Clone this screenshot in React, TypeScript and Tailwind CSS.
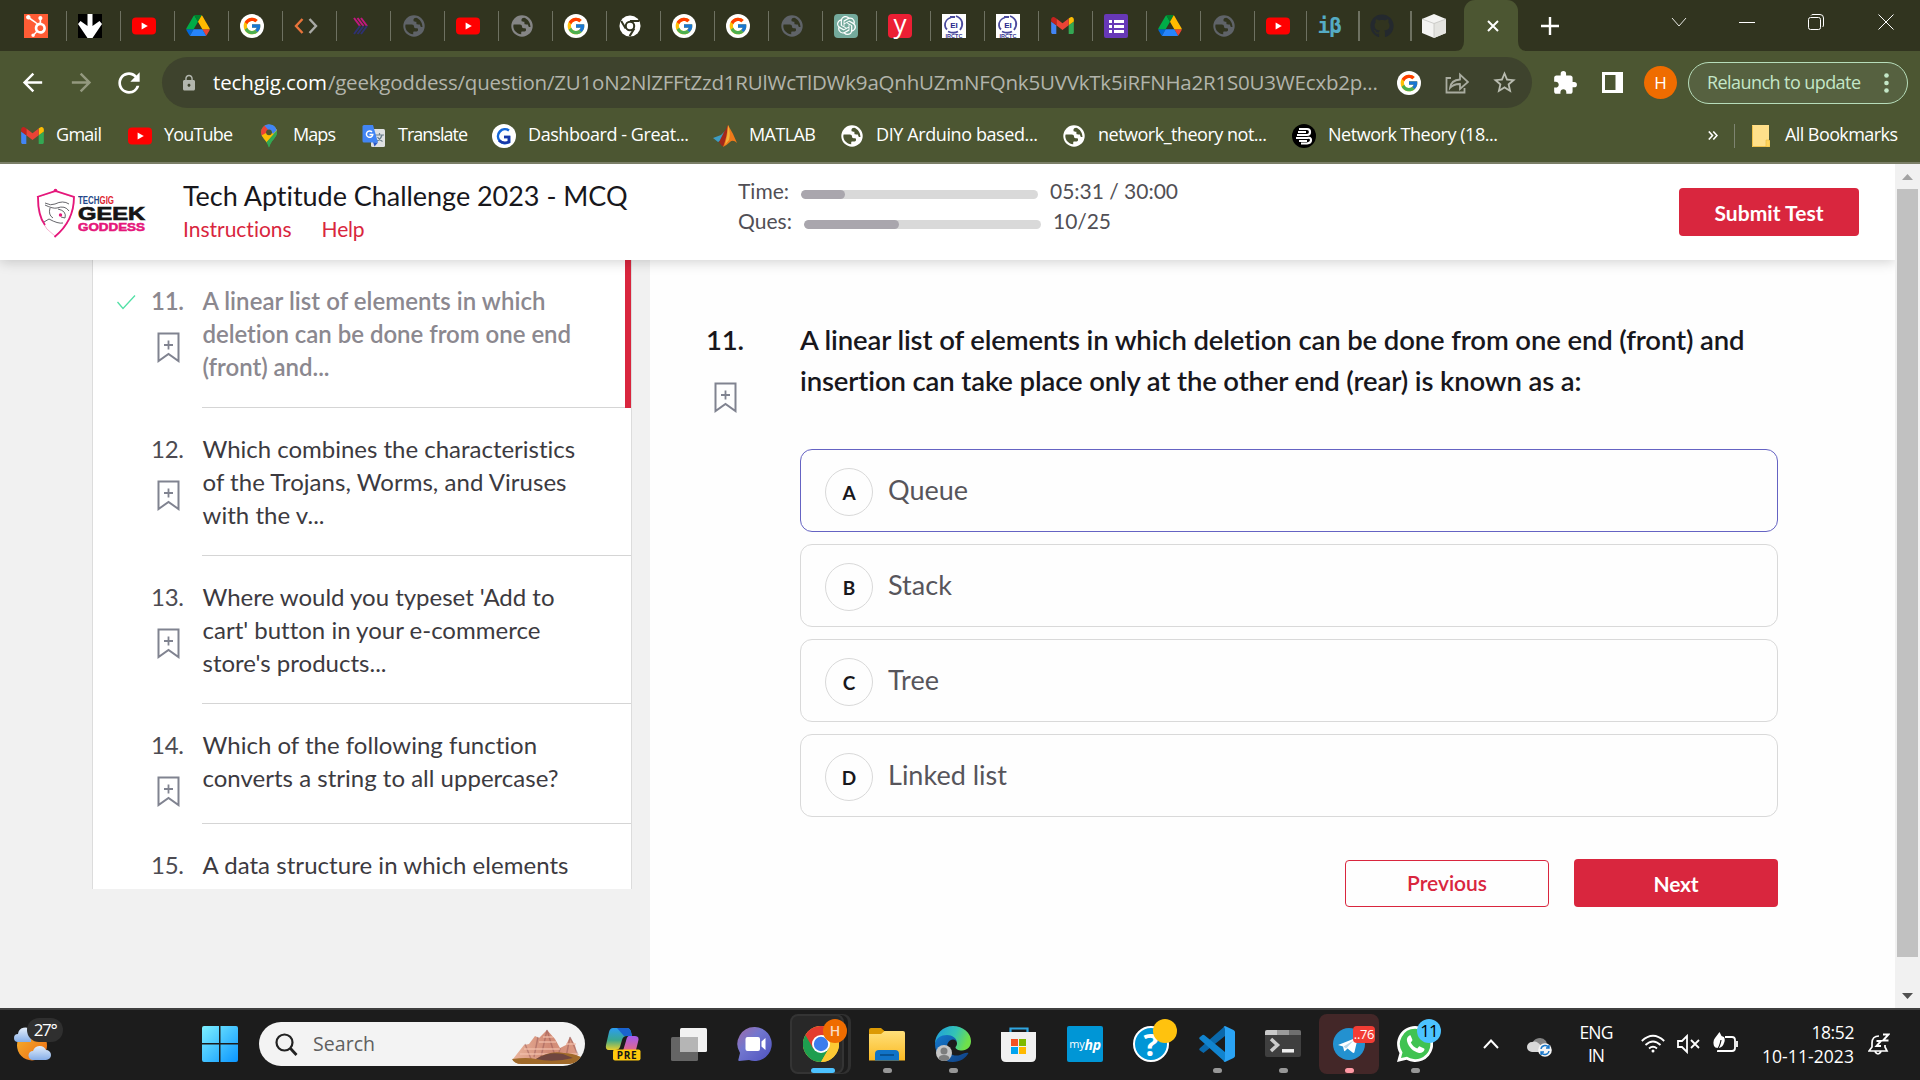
import { useLayoutEffect, useRef, useState, type ReactNode } from "react";
import { FcGoogle } from "react-icons/fc";
import { FaHubspot, FaGithub } from "react-icons/fa";
import { MdArrowBack, MdArrowForward, MdRefresh, MdLock, MdStarBorder, MdExtension } from "react-icons/md";
import { SiOpenai } from "react-icons/si";

/* Text whose tracking is adjusted so that the line fills the given width. */
function Fit({ w, className = "", children }: { w: number; className?: string; children: ReactNode }) {
  const ref = useRef<HTMLSpanElement>(null);
  const [spacing, setSpacing] = useState(0);
  useLayoutEffect(() => {
    const el = ref.current;
    if (!el) return;
    el.style.letterSpacing = "0px";
    const n = (el.textContent || "").length;
    const s = (w - el.getBoundingClientRect().width) / Math.max(1, n - 1);
    el.style.letterSpacing = `${s}px`;
    setSpacing(s);
  }, [w]);
  return (
    <span ref={ref} className={`inline-block whitespace-nowrap ${className}`} style={{ letterSpacing: `${spacing}px` }}>
      {children}
    </span>
  );
}

/* ---------- favicons ---------- */

const YouTube = () => (
  <svg className="h-6 w-6" viewBox="0 0 24 24">
    <rect x="0" y="3.5" width="24" height="17" rx="4" fill="#f00" />
    <path d="M9.6 8.4v7.2l6.2-3.6z" fill="#fff" />
  </svg>
);

const Drive = () => (
  <svg className="h-[21px] w-6" viewBox="0 0 87.3 78">
    <path fill="#0066da" d="m6.6 66.85 3.85 6.65c.8 1.4 1.95 2.5 3.3 3.3l13.75-23.8h-27.5c0 1.55.4 3.1 1.2 4.5z" />
    <path fill="#00ac47" d="m43.65 25-13.75-23.8c-1.35.8-2.5 1.9-3.3 3.3l-25.4 44a9.06 9.06 0 0 0 -1.2 4.5h27.5z" />
    <path fill="#ea4335" d="m73.55 76.8c1.35-.8 2.5-1.9 3.3-3.3l1.6-2.75 7.65-13.25c.8-1.4 1.2-2.95 1.2-4.5h-27.502l5.852 11.5z" />
    <path fill="#00832d" d="m43.65 25 13.75-23.8c-1.35-.8-2.9-1.2-4.5-1.2h-18.5c-1.6 0-3.15.45-4.5 1.2z" />
    <path fill="#2684fc" d="m59.8 53h-32.3l-13.75 23.8c1.35.8 2.9 1.2 4.5 1.2h50.8c1.6 0 3.15-.45 4.5-1.2z" />
    <path fill="#ffba00" d="m73.4 26.5-12.7-22c-.8-1.4-1.95-2.5-3.3-3.3l-13.75 23.8 16.15 28h27.45c0-1.55-.4-3.1-1.2-4.5z" />
  </svg>
);

const Gmail = () => (
  <svg className="h-[17px] w-[23px]" viewBox="52 42 88 66">
    <path fill="#4285f4" d="M58 108h14V74L52 59v43c0 3.32 2.69 6 6 6" />
    <path fill="#34a853" d="M120 108h14c3.32 0 6-2.69 6-6V59l-20 15" />
    <path fill="#fbbc04" d="M120 48v26l20-15v-8c0-7.42-8.47-11.65-14.4-7.2" />
    <path fill="#ea4335" d="M72 74V48l24 18 24-18v26L96 92" />
    <path fill="#c5221f" d="M52 51v8l20 15V48l-5.6-4.2c-5.94-4.45-14.4-.22-14.4 7.2" />
  </svg>
);

const Google = () => (
  <span className="flex h-6 w-6 items-center justify-center rounded-full bg-white">
    <FcGoogle className="h-5 w-5" />
  </span>
);

const Globe = ({ fill = "#5f6368", hole = "#31341f" }: { fill?: string; hole?: string }) => (
  <svg className="h-6 w-6" viewBox="0 0 24 24">
    <circle cx="12" cy="12" r="10.7" fill={fill} />
    <path
      d="M3.6 10.5h6.2c1.4 0 2.2.9 2.2 2s.6 1.700 1.700 1.700h1.200c.9 0 1.100.6 1.100 1.300v.6c0 .9-.5 1.300-1.400 1.300h-2.400c-.6 0-1 .5-1 1.100v1.700c-4.500-.5-7.900-4-7.900-8.300z"
      fill={hole}
    />
    <path d="M14.200 3.700c-1.600 0-2.700.8-2.700 2v.8c0 .8.700 1.200 1.500 1.200h1.400v1.500c0 .8.600 1.200 1.500 1.200h1.300c.8 0 1 .5 1 1.100 0 .9.600 1.500 1.500 1.500h.8c-.2-4.600-2.500-7.900-6.300-9.300z" fill={hole} />
  </svg>
);

const Code = () => (
  <svg className="h-6 w-6" viewBox="0 0 24 24" fill="none" strokeWidth="2.4">
    <path d="M8.500 5 2 12l6.500 7" stroke="#e8743b" />
    <path d="M15.500 5 22 12l-6.500 7" stroke="#a9aaa6" />
  </svg>
);

const Stripes = () => (
  <svg className="h-6 w-6" viewBox="0 0 24 24" fill="none" strokeWidth="2">
    <path d="M6 4l6 8M9.500 4l6 8M13 4l6 8" stroke="#c2187e" />
    <path d="M12 12l-6 8M15.500 12l-6 8M19 12l-6 8" stroke="#2d3170" />
  </svg>
);

const DownArrow = () => (
  <svg className="h-6 w-6" viewBox="0 0 24 24">
    <path d="M0 0h24v24H0z" fill="#000" />
    <path d="M9.500 0h5v12l7-5 2.500 3L14.500 24h-5L0 10l2.500-3 7 5z" fill="#fff" />
  </svg>
);

const ChromeMono = () => (
  <svg className="h-[22px] w-[22px]" viewBox="0 0 24 24">
    <circle cx="12" cy="12" r="11.500" fill="#fff" />
    <circle cx="12" cy="12" r="4.600" fill="none" stroke="#31341f" strokeWidth="2.200" />
    <path d="M12 6.500h10M7.300 14.800 2.400 6.500M16.800 14.700 11.500 23" stroke="#31341f" strokeWidth="2.200" fill="none" />
  </svg>
);

const Institute = () => (
  <svg className="h-6 w-6" viewBox="0 0 24 24">
    <path d="M0 0h24v24H0z" fill="#fff" />
    <path d="M9 3.500a8 8 0 0 0-6 8q0 2 2 4M14 2q5 2 6 6t-2 8M6 17.500q6 2.500 10 0" fill="none" stroke="#4a4a9e" strokeWidth="1.800" />
    <path d="M8 2h5v2H8z" fill="#4a4a9e" />
    <text x="12" y="14" fontSize="8" textAnchor="middle" fontWeight="900" fill="#27278c" fontFamily="Liberation Sans">EI</text>
    <text x="12" y="23.500" fontSize="5.500" textAnchor="middle" textLength="17" fontWeight="700" fill="#34348f" fontFamily="Liberation Sans">IRCTC</text>
  </svg>
);

const Forms = () => (
  <svg className="h-6 w-6" viewBox="0 0 24 24">
    <rect width="24" height="24" rx="2" fill="#6738b7" />
    <path d="M5 6h3v3H5zM10 6h10v3H10zM5 11h3v3H5zM10 11h10v3H10zM5 16h3v3H5zM10 16h10v3H10z" fill="#fff" />
  </svg>
);

const Cube = () => (
  <svg className="h-6 w-6" viewBox="0 0 24 24">
    <path d="M12 0l12 5v14l-12 5L0 19V5z" fill="#f4f4f2" />
    <path d="M12 9.500 24 5v14l-12 5z" fill="#e4e4e0" />
    <path d="M0 5l12 4.500L24 5M12 9.500V24" stroke="#c4c4c0" strokeWidth=".8" fill="none" />
  </svg>
);

const tabs: ReactNode[] = [
  <span className="flex h-6 w-6 items-center justify-center bg-[#ff5c35]"><FaHubspot className="h-[22px] w-[22px] text-white" /></span>,
  <DownArrow />, <YouTube />, <Drive />, <Google />, <Code />, <Stripes />, <Globe />, <YouTube />,
  <Globe fill="#858585" />, <Google />, <ChromeMono />, <Google />, <Google />, <Globe />,
  <span className="flex h-6 w-6 items-center justify-center rounded-sm bg-[#74aa9c]"><SiOpenai className="h-[19px] w-[19px] text-white" /></span>,
  <span className="flex h-6 w-6 items-center justify-center rounded-sm bg-[#ec1f34] pb-1.5 font-['Open_Sans',sans-serif] text-[26px] leading-none text-white">y</span>,
  <Institute />, <Institute />, <Gmail />, <Forms />, <Drive />, <Globe />, <YouTube />,
  <span className="font-['DejaVu_Sans_Mono',monospace] text-[21px] font-bold leading-6 tracking-[-1px] text-[#55acc5]">iβ</span>,
  <FaGithub className="h-6 w-6 text-[#24292e]" />,
  <Cube />,
];

function TabStrip() {
  return (
    <div className="flex h-[51px] bg-[#31341f] pl-[13px]">
      {tabs.map((icon, i) => (
        <div key={i} className={`flex h-[51px] shrink-0 items-center justify-between ${i < 23 ? "w-[54px]" : i === 26 ? "w-[43px]" : "w-[52.250px]"}`}>
          <span className={`flex w-6 justify-center ${i > 23 ? "ml-[10px]" : "ml-[11px]"}`}>{icon}</span>
          {i < 26 && <span className="h-[30px] w-[1.500px] bg-[#6e7161]" />}
        </div>
      ))}
      <div className="flex items-end">
        <svg className="h-[10px] w-[9px]" viewBox="0 0 9 10"><path d="M9 0v10H0q9 0 9-10" fill="#4c5632" /></svg>
        <div className="flex h-[51px] w-[54px] items-center justify-center rounded-t-[11px] bg-[#4c5632]">
          <svg className="mt-px ml-1 h-3 w-3" viewBox="0 0 12 12"><path d="m1 1 10 10M11 1 1 11" stroke="#fff" strokeWidth="2" /></svg>
        </div>
        <svg className="h-[10px] w-[9px]" viewBox="0 0 9 10"><path d="M0 0v10h9q-9 0-9-10" fill="#4c5632" /></svg>
      </div>
      <div className="flex flex-1 items-center text-white">
        <svg className="ml-[14px] h-[18px] w-[18px]" viewBox="0 0 18 18"><path d="M9 0v18M0 9h18" stroke="#fff" strokeWidth="2.400" /></svg>
        <div className="mb-2 ml-auto flex items-center pr-[26px]">
          <svg className="mr-[52px] h-[10px] w-4" viewBox="0 0 16 10"><path d="m1 1 7 8 7-8" stroke="#e8e9e4" fill="none" /></svg>
          <svg className="mr-[53px] h-4 w-4" viewBox="0 0 16 16"><path d="M0 8.500h16" stroke="#fff" /></svg>
          <svg className="mr-[54px] h-4 w-4" viewBox="0 0 16 16"><rect x=".5" y="3.500" width="12" height="12" rx="2" fill="none" stroke="#fff" /><path d="M3 1.500Q3.500.5 5 .5h7q3.500 0 3.500 3.500v7q0 1.500-1 2" fill="none" stroke="#fff" /></svg>
          <svg className="h-4 w-4" viewBox="0 0 16 16"><path d="m.5.5 15 15M15.500.5l-15 15" stroke="#fff" /></svg>
        </div>
      </div>
    </div>
  );
}

function Toolbar() {
  return (
    <div className="flex h-[63px] items-center bg-[#4c5632] text-[#d0d2ca]">
      <div className="flex w-[162px] items-center">
        <MdArrowBack className="ml-[18px] h-[29px] w-[29px] text-white" />
        <MdArrowForward className="ml-[20px] h-[29px] w-[29px] text-[#94997f]" />
        <MdRefresh className="ml-[17px] h-[32px] w-[32px] text-white" />
      </div>
      <div className="flex h-[51px] w-[1370px] items-center rounded-full bg-[#3e432d]">
        <MdLock className="ml-[18px] h-[18px] w-[18px] text-[#b3b7ae]" />
        <div className="ml-[15px] flex w-[1175px] pb-[2px] text-[20.500px] leading-7 text-[#b2b4ab]">
          <Fit w={114} className="text-white">techgig.com</Fit>
          <Fit w={1050} className="ml-px">/geekgoddess/question/ZU1oN2NlZFFtZzd1RUlWcTlDWk9aQnhUZmNFQnk5UVVkTk5iRFNHa2R1S0U3WEcxb2p...</Fit>
        </div>
        <div className="ml-[9px]"><Google /></div>
        <svg className="ml-6 h-6 w-6" viewBox="0 0 24 24" fill="none" stroke="#a9aca0" strokeWidth="1.800">
          <path d="M6 7H1.500v14.500h18V17" />
          <path d="M5 17q1-8 10-8.500V3.500l8 7.500-8 7v-5q-6-.3-10 4z" />
        </svg>
        <MdStarBorder className="ml-[22px] h-[27px] w-[27px] text-[#b9bcb0]" />
      </div>
      <MdExtension className="ml-[20px] h-[26px] w-[26px] text-white" />
      <svg className="ml-[24px] h-[21px] w-[21px]" viewBox="0 0 21 21"><path fillRule="evenodd" d="M0 0h21v21H0zM3 3v15h10.500V3z" fill="#fff" /></svg>
      <span className="ml-[21px] flex h-[33px] w-[33px] items-center justify-center rounded-full bg-[#ef6c00] text-[17px] text-white">H</span>
      <div className="ml-[11px] flex h-[42px] w-[220px] items-center rounded-full border-[1.500px] border-[#b7ddbb] bg-[#566140] pl-[18px] text-[18px] text-[#c4e7c8]">
        <Fit w={154} className="pb-px">Relaunch to update</Fit>
        <svg className="ml-[24px] h-5 w-[5px]" viewBox="0 0 5 20" fill="#c4e7c8"><circle cx="2.500" cy="2.500" r="2.300" /><circle cx="2.500" cy="10" r="2.300" /><circle cx="2.500" cy="17.500" r="2.300" /></svg>
      </div>
    </div>
  );
}

const MapPin = () => (
  <svg className="h-6 w-6" viewBox="0 0 24 24">
    <defs><clipPath id="pin"><path d="M12 .5c-4.500 0-8 3.500-8 7.800 0 5.500 5.500 7.200 8 15.200 2.500-8 8-9.700 8-15.200 0-4.300-3.500-7.800-8-7.800z" /></clipPath></defs>
    <g clipPath="url(#pin)">
      <path d="M0 0h24v24H0z" fill="#34a853" />
      <path d="M0 0h12l1 8-8 5-5-2z" fill="#ea4335" />
      <path d="M6 0h18v4l-9 6z" fill="#4285f4" />
      <path d="M0 14 9 9l6-2 6-5v4L8 20z" fill="#fbbc04" />
      <path d="M8 20 22 4v20H8z" fill="#34a853" />
      <path d="M9 0h15v2l-8 8z" fill="#4285f4" />
    </g>
    <circle cx="12" cy="8.300" r="2.900" fill="#4c5632" />
  </svg>
);

const Translate = () => (
  <svg className="h-6 w-6" viewBox="0 0 24 24">
    <rect x="9" y="5" width="14" height="18" rx="1.500" fill="#dfe1e3" />
    <path d="m11 18 5 .5-3.500 4z" fill="#2a56c6" />
    <path d="M13 11h9M17.500 9v2M20 11q-1 4-5 6M15.500 13q2 3 5 4.500" stroke="#6b7f8c" fill="none" strokeWidth="1.200" />
    <path d="M2 1h9l5 17.500H2q-1.500 0-1.500-1.500V2.500Q.5 1 2 1z" fill="#4285f4" />
    <path d="M10 8a3.200 3.200 0 1 0 .8 2.500H7.500" stroke="#fff" strokeWidth="1.500" fill="none" />
  </svg>
);

const GreatLearning = () => (
  <svg className="h-6 w-6" viewBox="0 0 24 24">
    <circle cx="12" cy="12" r="12" fill="#fff" />
    <path d="M17 6.500A7 7 0 1 0 17 18v-5h-5" fill="none" stroke="#1467d8" strokeWidth="2.600" />
    <path d="M7 16.500q4 3.500 10 1.500v-5h-5" fill="none" stroke="#1838a8" strokeWidth="2.600" />
  </svg>
);

const Matlab = () => (
  <svg className="h-6 w-6" viewBox="0 0 24 24">
    <path d="M0 14l8-3 4-4-3 9-4 2z" fill="#3d9dc4" />
    <path d="M6 18 11 8q2-2 4-7 1 10-3 19-2 3-3 2z" fill="#a2271b" />
    <path d="M15 1q5 8 9 18-4-4-7-1-3 3-7 5 4-10 5-22z" fill="#ef7a1a" />
    <path d="M15 1q3 8 1 15l-4 5q3-10 3-20z" fill="#f6b13d" />
  </svg>
);

const Brand3 = () => (
  <svg className="h-6 w-6" viewBox="0 0 24 24">
    <circle cx="12" cy="12" r="12" fill="#000" />
    <path d="M7 5h8q3 0 3 3t-3 3H8M6 8h8M5 11h9M4 14h11q4-1 4 2t-4 3.500H9M7 17h8" stroke="#fff" strokeWidth="2.200" fill="none" />
  </svg>
);

const bookmarks: { icon: ReactNode; label: string; w: number; cell: string }[] = [
  { icon: <Gmail />, label: "Gmail", w: 46, cell: "w-[108px]" },
  { icon: <YouTube />, label: "YouTube", w: 69, cell: "w-[129px]" },
  { icon: <MapPin />, label: "Maps", w: 43, cell: "w-[105px]" },
  { icon: <Translate />, label: "Translate", w: 70, cell: "w-[130px]" },
  { icon: <GreatLearning />, label: "Dashboard - Great...", w: 161, cell: "w-[221px]" },
  { icon: <Matlab />, label: "MATLAB", w: 67, cell: "w-[127px]" },
  { icon: <Globe fill="#fff" hole="#4c5632" />, label: "DIY Arduino based...", w: 162, cell: "w-[222px]" },
  { icon: <Globe fill="#fff" hole="#4c5632" />, label: "network_theory not...", w: 169, cell: "w-[230px]" },
  { icon: <Brand3 />, label: "Network Theory (18...", w: 170, cell: "w-[230px]" },
];

function Bookmarks() {
  return (
    <div className="flex h-[50px] items-center border-b-2 border-[#7b7f68] bg-[#4c5632] pb-[5px] pl-5 text-[18px] text-white">
      {bookmarks.map((b) => (
        <div key={b.label} className={`flex shrink-0 items-center gap-3 ${b.cell}`}>
          <span className="flex w-6 shrink-0 items-center justify-center">{b.icon}</span>
          <Fit w={b.w} className="pb-[2px]">{b.label}</Fit>
        </div>
      ))}
      <svg className="ml-[186px] h-[9px] w-[10px]" viewBox="0 0 10 9"><path d="m.8.5 3.700 4-3.700 4M5.300.5l3.700 4-3.700 4" stroke="#fff" strokeWidth="1.600" fill="none" /></svg>
      <span className="ml-[16px] h-6 w-px bg-[#7e8471]" />
      <svg className="ml-[17px] h-[22px] w-[18px]" viewBox="0 0 18 22"><path d="M0 0h17v15l1 1v6H0z" fill="#ffe08a" /><path d="M.5.500v21h17V16" stroke="#f0c24a" fill="none" /><path d="M14 15h3l1 1v6h-4z" fill="#ffd45c" stroke="#e6b83e" strokeWidth=".6" /></svg>
      <Fit w={113} className="ml-[15px] pb-[2px]">All Bookmarks</Fit>
    </div>
  );
}

/* ---------- page ---------- */

function Logo() {
  return (
    <div className="flex">
      <svg className="h-[52px] w-[40px]" viewBox="0 0 40 52">
        <path d="M19.500 3.500 1.500 9q-1 27 17.500 39Q39 34 37.500 9z" fill="#fff" stroke="#f6b3cf" strokeWidth="1" />
        <path d="M2 9Q2 28 9 37M1 9l18.500-6L38 9Q38 33 18.500 49" fill="none" stroke="#e5177b" strokeWidth="1.800" />
        <path d="M9 15q6 3 10 1 8-4 14 0M9 17q8 4 12 3 8-3 12 3M14 20q-2 7 3 10M8 34l5-3q9 5 14 4M22 21q9 2 7 9l-4-1" fill="none" stroke="#55555a" strokeWidth=".9" />
        <circle cx="24.500" cy="27" r="1.700" fill="#e5177b" /><circle cx="19.500" cy="2.500" r="1.800" fill="#e5177b" />
      </svg>
      <div className="flex flex-col pt-[6px] pl-[2px] font-['Liberation_Sans',sans-serif] font-bold">
        <svg className="h-[11px] w-[70px]" viewBox="0 0 70 11">
          <text x="0" y="9.500" fontSize="11" textLength="36" lengthAdjust="spacingAndGlyphs" fill="#1f4788">TECH<tspan fill="#e0232e">GIG</tspan></text>
        </svg>
        <svg className="h-[16px] w-[70px]" viewBox="0 0 70 16">
          <text x="0" y="15" fontSize="18" textLength="67" lengthAdjust="spacingAndGlyphs" fill="#151515" stroke="#151515" strokeWidth=".7">GEEK</text>
        </svg>
        <svg className="h-[12px] w-[70px]" viewBox="0 0 70 12">
          <text x="0" y="9.500" fontSize="10" textLength="67" lengthAdjust="spacingAndGlyphs" fill="#e5177b" stroke="#e5177b" strokeWidth=".5">GODDESS</text>
        </svg>
      </div>
    </div>
  );
}

function Progress({ label, lw, fill, value, vw }: { label: string; lw: number; fill: string; value: string; vw: number }) {
  return (
    <div className="flex h-[30px] items-center">
      <Fit w={lw} className="pb-[2px]">{label}</Fit>
      <div className="mt-[5px] ml-3 h-[9px] w-[237px] overflow-hidden rounded-full bg-[#d9d9d9]">
        <div className={`h-full rounded-full bg-[#a9a6ad] ${fill}`} />
      </div>
      <Fit w={vw} className="ml-3 pb-[2px]">{value}</Fit>
    </div>
  );
}

function Header() {
  return (
    <header className="relative z-10 flex h-24 w-full shrink-0 bg-white font-['Lato',sans-serif] shadow-[0_2px_12px_rgba(0,0,0,0.18)]">
      <div className="w-[183px] pt-6 pl-9"><Logo /></div>
      <div className="flex w-[555px] flex-col pt-[14px]">
        <Fit w={445} className="self-start text-[27px] leading-9 text-[#18171c]">Tech Aptitude Challenge 2023 - MCQ</Fit>
        <div className="flex gap-[30px] text-[21px] leading-[30px] text-[#d9263e]">
          <Fit w={109}>Instructions</Fit>
          <Fit w={43}>Help</Fit>
        </div>
      </div>
      <div className="pt-[13px] text-[21px] text-[#514f55]">
        <Progress label="Time:" lw={51} fill="w-[44px]" value="05:31 / 30:00" vw={128} />
        <Progress label="Ques:" lw={54} fill="w-[95px]" value="10/25" vw={58} />
      </div>
      <button className="mt-6 mr-9 ml-auto h-12 w-[180px] rounded-[4px] bg-[#d9263e] pt-[2px] text-[21px] font-bold text-white">
        <Fit w={109}>Submit Test</Fit>
      </button>
    </header>
  );
}

const Bookmark = () => (
  <svg className="h-[31px] w-[23px]" viewBox="0 0 23 31" fill="none" stroke="#808390" strokeWidth="2">
    <path d="M1.500 1.500h20v27.500l-10-7-10 7z" />
    <path d="M11.500 8.500v9M7 13h9" strokeWidth="1.800" />
  </svg>
);

const questions: { n: string; lines: [string, number][]; active?: boolean }[] = [
  { n: "11.", active: true, lines: [["A linear list of elements in which", 343], ["deletion can be done from one end", 369], ["(front) and...", 127]] },
  { n: "12.", lines: [["Which combines the characteristics", 373], ["of the Trojans, Worms, and Viruses", 364], ["with the v...", 122]] },
  { n: "13.", lines: [["Where would you typeset 'Add to", 352], ["cart' button in your e-commerce", 337], ["store's products...", 184]] },
  { n: "14.", lines: [["Which of the following function", 335], ["converts a string to all uppercase?", 356]] },
  { n: "15.", lines: [["A data structure in which elements", 366]] },
];

function Sidebar() {
  return (
    <aside className="w-[650px] shrink-0 bg-[#f1f1f1] pl-[92px]">
      <div className="h-[629px] w-[540px] overflow-hidden border-x border-[#dcdcdc] bg-white text-[24px] leading-[33px]">
        {questions.map((q) => (
          <div key={q.n} className={`relative flex pl-6 ${q.active ? "font-semibold text-[#8b888f]" : "text-[#3c3a40]"}`}>
            {q.active && <span className="absolute top-0 -right-px h-[148px] w-[7px] bg-[#d9263e]" />}
            <div className="w-[34px] pt-[34px]">
              {q.active && <svg className="h-4 w-[19px]" viewBox="0 0 19 16"><path d="m.5 8 5.500 6.500L18 1.500" stroke="#52e0a6" strokeWidth="1.300" fill="none" /></svg>}
            </div>
            <div className="flex w-[51px] flex-col pt-[24px]">
              <Fit w={33} className={`self-start ${q.active ? "" : "text-[#4d4b52]"}`}>{q.n}</Fit>
              <div className="mt-[15px] ml-[6px]"><Bookmark /></div>
            </div>
            <div className="flex min-h-[119.500px] flex-1 flex-col border-b border-[#d5d5d5] py-[24px]">
              {q.lines.map(([t, w]) => <Fit key={t} w={w} className="ml-[0.500px] self-start">{t}</Fit>)}
            </div>
          </div>
        ))}
      </div>
    </aside>
  );
}

const options: [string, string, number][] = [["A", "Queue", 80], ["B", "Stack", 64], ["C", "Tree", 51], ["D", "Linked list", 119]];

function Question() {
  return (
    <main className="flex flex-1 bg-[#fefefe] pt-[59px] pl-[56px]">
      <div className="flex w-[94px] flex-col text-[27.500px] leading-[41px] font-semibold text-[#18171c]">
        <Fit w={38} className="self-start">11.</Fit>
        <div className="mt-[22px] ml-[8px]"><Bookmark /></div>
      </div>
      <div className="w-[978px]">
        <h1 className="flex h-[130px] flex-col text-[27.500px] leading-[41px] font-semibold text-[#18171c]">
          <Fit w={945} className="self-start">A linear list of elements in which deletion can be done from one end (front) and</Fit>
          <Fit w={782} className="self-start">insertion can take place only at the other end (rear) is known as a:</Fit>
        </h1>
        <div className="flex flex-col gap-3">
          {options.map(([k, t, w]) => (
            <div key={k} className={`flex h-[83px] items-center gap-[15px] rounded-xl border pl-6 text-[27px] text-[#57555b] ${k === "A" ? "border-[#6563c3]" : "border-[#d9d9d9]"}`}>
              <span className="mt-[2px] flex h-12 w-12 items-center justify-center rounded-full border border-[#d9d9d9] pt-1 text-[19px] font-bold text-[#18171c]">{k}</span>
              <Fit w={w}>{t}</Fit>
            </div>
          ))}
        </div>
        <div className="mt-[42px] flex items-end justify-end gap-[25px] text-[21px]">
          <button className="h-[47px] w-[204px] rounded-[4px] border border-[#d9263e] pb-[2px] font-semibold text-[#d9263e]"><Fit w={80}>Previous</Fit></button>
          <button className="h-12 w-[204px] rounded-[4px] bg-[#d9263e] pt-[2px] font-bold text-white"><Fit w={45}>Next</Fit></button>
        </div>
      </div>
    </main>
  );
}

function Scrollbar() {
  return (
    <div className="flex w-[25px] shrink-0 flex-col items-center bg-[#f1f1f1]">
      <svg className="h-[25px] w-[25px]" viewBox="0 0 25 25"><path d="m7 16 5.500-6 5.500 6z" fill="#a3a3a3" /></svg>
      <div className="h-[768px] w-[21px] bg-[#c1c1c1]" />
      <svg className="mt-[26px] h-[25px] w-[25px]" viewBox="0 0 25 25"><path d="m7 10 5.500 6 5.500-6z" fill="#505050" /></svg>
    </div>
  );
}

/* ---------- taskbar ---------- */

const Weather = () => (
  <svg className="h-[36px] w-[38px]" viewBox="0 0 38 36">
    <defs>
      <linearGradient id="sun" x1="0" y1="0" x2="1" y2="1"><stop stopColor="#f5b52f" /><stop offset="1" stopColor="#ee6a13" /></linearGradient>
      <linearGradient id="cloud" x1="0" y1="0" x2="0" y2="1"><stop stopColor="#e3eefb" /><stop offset="1" stopColor="#86aee8" /></linearGradient>
    </defs>
    <circle cx="18" cy="19.500" r="15" fill="url(#sun)" />
    <path d="M4 16a4 4 0 0 1 0-8 7 7 0 0 1 13-3v11z" fill="url(#cloud)" />
    <path d="M19 34a4.500 4.500 0 0 1 0-9 7 7 0 0 1 13-1 5 5 0 0 1 0 10z" fill="url(#cloud)" />
  </svg>
);

const Rocks = () => (
  <svg className="h-9 w-[74px]" viewBox="0 0 74 36">
    <defs><linearGradient id="rock" x1="0" y1="0" x2="1" y2="0"><stop stopColor="#eab49c" /><stop offset=".55" stopColor="#d18a75" /><stop offset="1" stopColor="#dc9a83" /></linearGradient></defs>
    <path d="M3 30 14 16l5-1 6-8 4 2 8-8 8 9 5 9 6-3 4-8 5 8 3 14-8 5H8z" fill="url(#rock)" />
    <path d="M15 15l6 15M28 8l-4 20M37 1l-6 27M37 1l8 26M50 19l-2 10M60 8l-4 20M60 8l8 18" stroke="#8c5052" strokeWidth="1.400" fill="none" opacity=".45" />
    <path d="M33 8h10M29 13h17M14 20h36M10 25h58M56 15h10" stroke="#f3c2ac" strokeWidth="1.300" fill="none" opacity=".8" />
    <path d="M2 30q15-2 24 0 14-9 28-6 8 0 17 4-4 7-12 7H12Q4 35 2 30z" fill="#a06a2a" />
    <path d="M26 30q12-8 27-5l10 4q-20 5-37 1z" fill="#70463f" />
  </svg>
);

const Copilot = () => (
  <svg className="h-[34px] w-[36px]" viewBox="0 0 36 34">
    <defs>
      <linearGradient id="cpa" x1="0" y1="0" x2="0" y2="1"><stop stopColor="#2b9cf2" /><stop offset=".55" stopColor="#3aa88f" /><stop offset="1" stopColor="#e8cf2c" /></linearGradient>
      <linearGradient id="cpb" x1="0" y1="0" x2="0" y2="1"><stop stopColor="#a35bf0" /><stop offset="1" stopColor="#f26c6c" /></linearGradient>
    </defs>
    <path d="M8 1h14q3 0 4 4l1 4h-5q-4 0-5 4l-2 7q-1 3-5 3H4q-4 0-3-5L4 5q1-4 4-4z" fill="url(#cpa)" />
    <path d="M12 1h10q3 0 4 4l1 4h-8z" fill="#1a63cf" />
    <path d="M24 9h6q5 0 3 6l-2 8q-1 4-5 4h-9l4-13q1-5 3-5z" fill="url(#cpb)" />
    <rect x="8" y="22.500" width="27.500" height="11" rx="2" fill="#ffc90d" />
    <text x="21.700" y="31.600" fontSize="10" fontWeight="700" textAnchor="middle" fontFamily="Open Sans" fill="#151515" textLength="20">PRE</text>
  </svg>
);

const TaskView = () => (
  <svg className="h-9 w-9" viewBox="0 0 36 36">
    <rect x="0" y="11" width="27" height="24" rx="1.500" fill="#656565" />
    <rect x="9" y="2" width="27" height="24" rx="1.500" fill="#f2f2f2" />
    <path d="M9 11h18v15H9z" fill="#b5b5b5" />
  </svg>
);

const Chat = () => (
  <svg className="h-9 w-9" viewBox="0 0 36 36">
    <defs><linearGradient id="chat" x1="0" y1="0" x2="1" y2="1"><stop stopColor="#a06ba8" /><stop offset=".4" stopColor="#7277cf" /><stop offset="1" stopColor="#4d51bf" /></linearGradient></defs>
    <path d="M18 1a17 17 0 1 1-6 33l-10 1q-1 0-.5-2l1.500-6A17 17 0 0 1 18 1z" fill="url(#chat)" />
    <rect x="8.500" y="11" width="14.500" height="14" rx="2" fill="#fff" />
    <path d="M24.500 15.500 28.500 12v12l-4-3.500z" fill="#fff" />
  </svg>
);

const Chrome = () => (
  <svg className="h-9 w-9" viewBox="0 0 36 36">
    <circle cx="18" cy="18" r="18" fill="#fcc934" />
    <path d="M18 18 2.400 9A18 18 0 0 0 18 36l7.800-13.500z" fill="#1e9e4f" />
    <path d="M2.400 9a18 18 0 0 1 31.200 0H18v9l-7.800 4.500z" fill="#e33b2e" />
    <path d="M18 9h15.600A18 18 0 0 1 18 36l7.800-13.500z" fill="#fcc934" />
    <circle cx="18" cy="18" r="9" fill="#fff" /><circle cx="18" cy="18" r="7.200" fill="#3b7ded" />
  </svg>
);

const Explorer = () => (
  <svg className="h-9 w-9" viewBox="0 0 36 36">
    <defs><linearGradient id="fold" x1="0" y1="0" x2="0" y2="1"><stop stopColor="#ffe07a" /><stop offset="1" stopColor="#fbba23" /></linearGradient></defs>
    <path d="M0 4q0-2 2-2h10l4 3.500L12 9H0z" fill="#dc9a05" />
    <path d="M0 8h12l3.500-3H34q2 0 2 2v27.500H0z" fill="url(#fold)" />
    <path d="M6 34.500V28q0-4 4-4h16q4 0 4 4v6.500z" fill="#1173c7" />
    <path d="M11 29h14" stroke="#08508f" strokeWidth="1.800" />
  </svg>
);

const Edge = () => (
  <svg className="h-9 w-9" viewBox="0 0 36 36">
    <defs>
      <linearGradient id="ea" x1="0" y1="0" x2="1" y2=".3"><stop stopColor="#1c9be0" /><stop offset=".6" stopColor="#34c3b5" /><stop offset="1" stopColor="#6fe04a" /></linearGradient>
      <linearGradient id="eb" x1="0" y1="0" x2="1" y2="1"><stop stopColor="#1479ce" /><stop offset="1" stopColor="#103f82" /></linearGradient>
    </defs>
    <path d="M0 18C0 8 8 0 18 0s18 7 18 15c0 6-4 9.500-9 9.500-4 0-6.500-1.500-6.500-3 0-1 1.500-1.500 1.500-4 0-4-4-7-9-7C7 10.500 2 13 0 18z" fill="url(#ea)" />
    <path d="M0 18c1-6 6-9 12-9 5 0 10 3 10 8 0-2-2-3.500-4-3.500-4 0-6 4-6 7 0 7 7 10.500 13 8.500 3-1 6-3 8.500-2C31 32 25 36 18 36 7 36 0 28 0 18z" fill="url(#eb)" />
    <circle cx="9" cy="27" r="8" fill="#c6c6c6" /><circle cx="9" cy="25" r="3.500" fill="#7d7d7d" /><path d="M3.500 33q0-4 5.500-4t5.500 4q-5 4-11 0z" fill="#7d7d7d" />
  </svg>
);

const Store = () => (
  <svg className="h-9 w-9" viewBox="0 0 36 36">
    <path d="M9.500 7V2.500h17V7" stroke="#2fa5e0" strokeWidth="2.200" fill="none" />
    <path d="M0 6h35v25q0 5-5 5H5q-5 0-5-5z" fill="#f1f1f1" />
    <path d="M10 13h7v7h-7z" fill="#f25022" /><path d="M18 13h7v7h-7z" fill="#7fba00" /><path d="M10 21h7v7h-7z" fill="#00a4ef" /><path d="M18 21h7v7h-7z" fill="#ffb900" />
  </svg>
);

const VsCode = () => (
  <svg className="h-9 w-9" viewBox="0 0 36 36">
    <path d="M26 0v10L4.500 27 1 24.500q-1.500-1 0-2.500z" fill="#0a68ab" />
    <path d="M1 13.500q-1.500-1.500 0-2.500L3.500 9q1-.5 2 .3L26 26v10z" fill="#1184cf" />
    <path d="M26 0l8.500 4Q36 5 36 6v24q0 1-1.500 2L26 36l-1.500-1q1.500 0 1.500-2V3q0-2-1.500-2z" fill="#2aa3f4" />
  </svg>
);

const Terminal = () => (
  <svg className="h-9 w-9" viewBox="0 0 36 36">
    <rect y="4" width="36" height="27" rx="2" fill="#3f3f3f" />
    <path d="M2 4h10v5H0V6q0-2 2-2z" fill="#c9c9c9" /><path d="M12 4h12v5H12z" fill="#9b9b9b" /><path d="M24 4h10q2 0 2 2v3H24z" fill="#6f6f6f" />
    <path d="m6 13 6.500 6L6 25" stroke="#ccc" strokeWidth="3.500" fill="none" /><path d="M17 24.800h12" stroke="#f0f0f0" strokeWidth="3.500" />
  </svg>
);

const Telegram = () => (
  <svg className="h-8 w-8" viewBox="0 0 32 32">
    <circle cx="16" cy="16" r="16" fill="#2391d0" />
    <path d="M5 17 24 9.500q1-.2.500 1.500l-3 13q-.5 1.500-2 .5l-5-4-2.500 2.500q-.8.500-1-.5l-1-4z" fill="#fff" />
    <path d="m10.500 18.500 10-6-7.500 8z" fill="#b9d7ea" />
  </svg>
);

type App = { icon: ReactNode; dot?: string; box?: string; badge?: ReactNode };
const roundBadge = "absolute -top-[7px] left-[20px] flex h-6 w-6 items-center justify-center rounded-full";

const apps: App[] = [
  { icon: <Copilot /> },
  { icon: <TaskView /> },
  { icon: <Chat /> },
  { icon: <Chrome />, box: "border-2 border-[#343434] bg-[#282828] shadow-[5px_0_0_-1px_#1c1c1c,7px_0_0_0_#303030] -ml-2 w-[54px] pl-2 pt-[10px]", dot: "w-6 bg-[#4cc2ff] ml-1", badge: <span className={`${roundBadge} bg-[#ef6c00] text-sm font-semibold text-[#f9dcc5]`}>H</span> },
  { icon: <Explorer />, dot: "w-[9px] bg-[#979797]" },
  { icon: <Edge />, dot: "w-[9px] bg-[#979797]" },
  { icon: <Store /> },
  { icon: <span className="flex h-9 w-9 items-center justify-center rounded-[2px] bg-[#0096d6] text-[11px] tracking-tight text-white">my<b className="text-[14px] italic">hp</b></span> },
  { icon: <span className="flex h-9 w-9 items-center justify-center rounded-full border-2 border-white bg-[#0096d6] text-[31px] leading-none font-bold text-white">?</span>, badge: <span className={`${roundBadge} bg-[#ffc20e]`} /> },
  { icon: <VsCode />, dot: "w-[9px] bg-[#979797]" },
  { icon: <Terminal />, dot: "w-[9px] bg-[#979797]" },
  { icon: <Telegram />, box: "bg-[#432728] w-[60px] pt-3", dot: "w-[9px] bg-[#ff99a4]", badge: <span className="absolute top-0 left-[22px] flex h-[17px] w-[22px] items-center justify-center rounded-[4px] bg-[#f23c34] text-[13px] leading-none tracking-tight text-white">..76</span> },
  {
    icon: (
      <svg className="h-9 w-9" viewBox="0 0 36 36">
        <path d="M18 0a18 18 0 1 1-8.500 33.800L0 36l2.500-9A18 18 0 0 1 18 0z" fill="#fff" />
        <path d="M18 2.800a15.200 15.200 0 1 1-8 28L4 32l1.500-5.500A15.200 15.200 0 0 1 18 2.800z" fill="#40c351" />
        <path d="M12.500 9.500c-2 1-3 3-2.500 5.500 1.500 6 6 10.500 12 12 2.500.3 5-1 5.500-3.500 0-.6 0-.9-.4-1.100l-4.200-2c-.5-.2-.9 0-1.200.4l-1.400 1.700c-3-1.200-5-3-6.500-6l1.400-1.800c.2-.3.3-.7.1-1.100l-1.700-4c-.2-.4-.600-.4-1.100-.1z" fill="#fff" />
      </svg>
    ),
    dot: "w-[9px] bg-[#979797]",
    badge: <span className={`${roundBadge} bg-[#4cc2ff] text-[17px] tracking-tighter text-black`}>11</span>,
  },
];

function Taskbar() {
  return (
    <footer className="flex h-[72px] items-center border-t-2 border-[#404040] bg-[#1c1c1c] pb-[2px] text-white">
      <div className="relative ml-[14px] w-[188px]">
        <Weather />
        <span className="absolute -top-[8px] left-[13px] flex h-6 w-[36px] items-center justify-center rounded-full bg-[#2f2f2f] text-[17px]"><Fit w={24}>27°</Fit></span>
      </div>
      <svg className="h-9 w-9" viewBox="0 0 36 36">
        <defs><linearGradient id="win" x1="0" y1="0" x2="36" y2="36" gradientUnits="userSpaceOnUse"><stop stopColor="#7df0ff" /><stop offset="1" stopColor="#0a95ff" /></linearGradient></defs>
        <path d="M2 0h15v17H0V2q0-2 2-2zM18.500 0H34q2 0 2 2v15H18.500zM0 18.500h17V36H2q-2 0-2-2zM18.500 18.500H36V34q0 2-2 2H18.500z" fill="url(#win)" />
      </svg>
      <div className="ml-[21px] flex h-11 w-[326px] items-center rounded-full bg-[#f3f3f3] pl-4 text-[19.500px] text-[#5f5f5f]">
        <svg className="h-[23px] w-[23px]" viewBox="0 0 23 23"><circle cx="9.500" cy="9.500" r="8" fill="none" stroke="#222" strokeWidth="2.200" /><path d="m15.500 15.500 6 6.500" stroke="#222" strokeWidth="2.800" /></svg>
        <Fit w={62} className="ml-[15px]">Search</Fit>
        <div className="mt-[6px] mr-[1px] ml-auto overflow-hidden rounded-r-full"><Rocks /></div>
      </div>
      <div className="ml-[5px] flex">
        {apps.map((a, i) => (
          <div key={i} className="flex h-[60px] w-[66px] justify-center">
            <div className={`flex h-[60px] flex-col items-center rounded-lg ${a.box ?? "w-[60px] pt-3"}`}>
              <div className="relative flex h-9 w-9 shrink-0 items-center justify-center">{a.icon}{a.badge}</div>
              {a.dot && <span className={`mt-[6px] h-[5px] shrink-0 rounded-full ${a.dot}`} />}
            </div>
          </div>
        ))}
      </div>
      <svg className="ml-[35px] h-[10px] w-4" viewBox="0 0 16 10"><path d="m1 9 7-7.500L15 9" stroke="#fff" strokeWidth="2" fill="none" /></svg>
      <svg className="mt-1 ml-7 h-[22px] w-[26px]" viewBox="0 0 26 22">
        <path d="M6 15 5 9a8 8 0 0 1 14-3l2 6z" fill="#858585" /><path d="M5 17a5 5 0 0 1 0-10q5-2 9 4v6z" fill="#d8d8d8" />
        <circle cx="18" cy="15" r="6.800" fill="#f5f5f5" /><path d="M14 14a4.200 4.200 0 0 1 8-1M22 16a4.200 4.200 0 0 1-8 1M22 10v3h-3M14 20v-3h3" stroke="#1876c8" strokeWidth="1.400" fill="none" />
      </svg>
      <div className="ml-[25px] flex w-[36px] flex-col items-center text-[17.500px] leading-[23px]"><Fit w={34}>ENG</Fit><Fit w={17}>IN</Fit></div>
      <svg className="ml-[27px] h-5 w-6" viewBox="0 0 24 20" fill="none" stroke="#fff" strokeWidth="1.800"><path d="M.8 7q11.200-10.500 22.400 0M4.500 11q7.500-7 15 0M8 14.500q4-3.500 8 0" /><circle cx="12" cy="17" r="1.500" fill="#fff" stroke="none" /></svg>
      <svg className="ml-3 h-5 w-6" viewBox="0 0 24 20" fill="none" stroke="#fff" strokeWidth="1.800"><path d="M1 7v6h4l5 5V2L5 7zM14 6l8 8M22 6l-8 8" /></svg>
      <svg className="mb-[3px] ml-3 h-[22px] w-[25px]" viewBox="0 0 25 22" fill="none" stroke="#fff" strokeWidth="1.800">
        <path d="M12 5h7q3 0 3 3v8q0 3-3 3H4M24 9v6" /><path d="M1 14q-1.500-5 1-8l4.500-6 2 4 2.500 1q1.500 3 0 6-1 4-5 5-4 .5-5-2z" fill="#fff" stroke="none" /><path d="M3 19q4-4 5-11" stroke="#1c1c1c" strokeWidth="1.200" />
      </svg>
      <div className="ml-auto flex w-[94px] flex-col items-end text-[17.500px] leading-6"><Fit w={43}>18:52</Fit><Fit w={92}>10-11-2023</Fit></div>
      <svg className="mr-[30px] ml-[14px] h-[23px] w-[22px]" viewBox="0 0 22 23" fill="none" stroke="#fff" strokeWidth="1.700">
        <path d="M11 3Q4 3 4 10v4l-3 4h18l-2-4v-2M7 18.500q3 5 6 0" /><path d="M8.500 8h4.500l-4.500 5h4.500M15 1.500h5.500l-5.500 6h5.500" strokeWidth="1.900" />
      </svg>
    </footer>
  );
}

export default function App() {
  return (
    <div className="h-[1080px] w-[1920px] overflow-hidden bg-white font-['Open_Sans','Noto_Sans',sans-serif]">
      <TabStrip />
      <Toolbar />
      <Bookmarks />
      <div className="flex h-[844px]">
        <div className="flex min-w-0 flex-1 flex-col overflow-hidden font-['Lato',sans-serif]">
          <Header />
          <div className="flex flex-1"><Sidebar /><Question /></div>
        </div>
        <Scrollbar />
      </div>
      <Taskbar />
    </div>
  );
}
